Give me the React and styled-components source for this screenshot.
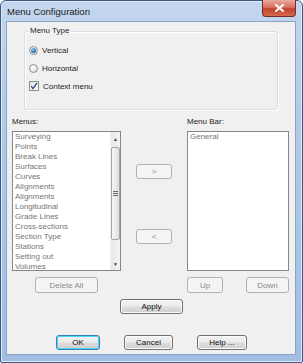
import React from "react";
import styled, { createGlobalStyle, css } from "styled-components";

const GlobalStyle = createGlobalStyle`
  html, body {
    margin: 0;
    padding: 0;
    background: #ffffff;
  }
  * {
    box-sizing: border-box;
  }
`;

const font = `"Liberation Sans", Arial, sans-serif`;

const Window = styled.div`
  width: 303px;
  height: 363px;
  display: flex;
  flex-direction: column;
  padding: 0 6px 7px 5px;
  border: 1px solid #3b5784;
  border-radius: 6px 6px 2px 2px;
  background: linear-gradient(180deg, #c3d6ee 0%, #b3cbe8 30%, #a1bde2 100%);
  box-shadow: inset 0 0 0 1px #dfeaf7;
  font-family: ${font};
`;

const TitleBar = styled.div`
  height: 20px;
  display: flex;
  align-items: flex-start;
  justify-content: space-between;
`;

const Title = styled.div`
  font-size: 9.5px;
  line-height: 10px;
  margin-top: 6px;
  margin-left: 1px;
  color: #1b1b1b;
`;

const CloseButton = styled.div`
  width: 34px;
  height: 17px;
  margin-top: -1px;
  border: 1px solid #7a2a22;
  border-top: none;
  border-radius: 0 0 4px 4px;
  background: linear-gradient(180deg, #e9a99c 0%, #d8715f 45%, #c1412c 55%, #d36b4e 100%);
  display: flex;
  align-items: center;
  justify-content: center;
`;

const Client = styled.div`
  flex: 1;
  background: #f0f0f0;
  border: 1px solid #8ba3c4;
  display: flex;
  flex-direction: column;
  padding: 0 0 0 5px;
`;

const GroupBox = styled.fieldset`
  margin: 4px 0 0 12px;
  width: 254px;
  height: 84px;
  padding: 0;
  border: 1px solid #d5dfe5;
  border-radius: 3px;
  box-shadow: inset 1px 1px 0 #ffffff, 1px 1px 0 #ffffff;
`;

const Legend = styled.legend`
  margin-left: 3px;
  padding: 0 2px;
  font-size: 8px;
  line-height: 10px;
  color: #1e1e1e;
`;

const Options = styled.div`
  display: flex;
  flex-direction: column;
  margin-top: 5px;
  padding-left: 4px;
`;

const Option = styled.label`
  height: 18px;
  display: flex;
  align-items: center;
  gap: 4px;
  font-size: 8px;
  color: #1e1e1e;
`;

const Radio = styled.span`
  width: 9px;
  height: 9px;
  border-radius: 50%;
  border: 1px solid #8e8f8f;
  background: radial-gradient(circle at 40% 35%, #ffffff 0%, #e6e6e6 60%, #cfcfcf 100%);
  display: flex;
  align-items: center;
  justify-content: center;
  ${(p) =>
    p.checked &&
    css`
      &::after {
        content: "";
        width: 5px;
        height: 5px;
        border-radius: 50%;
        background: radial-gradient(circle at 40% 35%, #8fd4f5 0%, #2a78b5 55%, #1c4f86 100%);
      }
    `}
`;

const Checkbox = styled.span`
  width: 10px;
  height: 10px;
  border: 1px solid #8e8f8f;
  background: linear-gradient(135deg, #e2e2e2 0%, #ffffff 100%);
  display: flex;
  align-items: center;
  justify-content: center;
`;

const Panels = styled.div`
  display: grid;
  grid-template-columns: 109px 36px 102px;
  column-gap: 15px;
  margin-top: 7px;
`;

const FieldLabel = styled.div`
  font-size: 8px;
  line-height: 10px;
  color: #1e1e1e;
  height: 10px;
`;

const ListBox = styled.div`
  margin-top: 4px;
  height: 140px;
  background: #ffffff;
  border: 1px solid #828790;
  display: flex;
  overflow: hidden;
`;

const Items = styled.div`
  flex: 1;
  padding: 0 0 0 2px;
  font-size: 8px;
  line-height: 10px;
  color: #767676;
  white-space: nowrap;
`;

const ScrollBar = styled.div`
  width: 10px;
  display: flex;
  flex-direction: column;
  background: linear-gradient(90deg, #e8e8e8, #f4f4f4);
  border-left: 1px solid #f0f0f0;
`;

const ScrollArrow = styled.div`
  height: 13px;
  display: flex;
  align-items: center;
  justify-content: center;
  font-size: 5px;
  color: #404040;
`;

const Thumb = styled.div`
  margin: 2px 0 0 0;
  height: 93px;
  border: 1px solid #a5a5a5;
  border-radius: 2px;
  background: linear-gradient(90deg, #f6f6f6 0%, #ebebeb 50%, #dcdcdc 100%);
  display: flex;
  align-items: center;
  justify-content: center;
`;

const Grip = styled.div`
  width: 5px;
  height: 5px;
  background: repeating-linear-gradient(180deg, #6b6b6b 0 1px, transparent 1px 2px);
`;

const ScrollTrack = styled.div`
  flex: 1;
`;

const MiddleColumn = styled.div`
  margin-top: 4px;
  display: flex;
  flex-direction: column;
  padding-top: 33px;
  gap: 50px;
`;

const Button = styled.div`
  height: ${(p) => p.h || 15}px;
  width: ${(p) => p.w}px;
  display: flex;
  align-items: center;
  justify-content: center;
  font-size: 8px;
  border-radius: 3px;
  ${(p) =>
    p.disabled
      ? css`
          border: 1px solid #adb2b5;
          background: #f4f4f4;
          color: #8a8a8a;
        `
      : css`
          border: 1px solid ${p.primary ? "#3c7fb1" : "#707070"};
          background: linear-gradient(180deg, #f2f2f2 0%, #ebebeb 48%, #dddddd 52%, #cfcfcf 100%);
          color: #111111;
          box-shadow: inset 0 0 0 1px ${p.primary ? "#48d8fb" : "#fcfcfc"};
        `}
`;

const ButtonCell = styled.div`
  margin-top: 6px;
  display: flex;
  justify-content: ${(p) => p.justify || "center"};
`;

const ApplyRow = styled.div`
  margin-top: 6px;
  display: flex;
  justify-content: center;
  padding-right: 4px;
`;

const DialogButtons = styled.div`
  margin-top: 21px;
  display: flex;
  justify-content: center;
  gap: 24px;
  padding-right: 4px;
`;

const menus = [
  "Surveying",
  "Points",
  "Break Lines",
  "Surfaces",
  "Curves",
  "Alignments",
  "Alignments",
  "Longitudinal",
  "Grade Lines",
  "Cross-sections",
  "Section Type",
  "Stations",
  "Setting out",
  "Volumes",
];

export default function App() {
  return (
    <>
      <GlobalStyle />
      <Window>
        <TitleBar>
          <Title>Menu Configuration</Title>
          <CloseButton>
            <svg width="9" height="8" viewBox="0 0 9 8">
              <path d="M1 1 L8 7 M8 1 L1 7" stroke="#ffffff" strokeWidth="2" strokeLinecap="square" />
            </svg>
          </CloseButton>
        </TitleBar>
        <Client>
          <GroupBox>
            <Legend>Menu Type</Legend>
            <Options>
              <Option>
                <Radio checked />
                Vertical
              </Option>
              <Option>
                <Radio />
                Horizontal
              </Option>
              <Option>
                <Checkbox>
                  <svg width="8" height="8" viewBox="0 0 8 8">
                    <path d="M1.2 4.2 L3 6.6 L7 0.8" stroke="#2b4a8a" strokeWidth="1.3" fill="none" />
                  </svg>
                </Checkbox>
                Context menu
              </Option>
            </Options>
          </GroupBox>

          <Panels>
            <FieldLabel>Menus:</FieldLabel>
            <div />
            <FieldLabel>Menu Bar:</FieldLabel>

            <ListBox>
              <Items>
                {menus.map((m, i) => (
                  <div key={i}>{m}</div>
                ))}
              </Items>
              <ScrollBar>
                <ScrollArrow>▲</ScrollArrow>
                <Thumb>
                  <Grip />
                </Thumb>
                <ScrollTrack />
                <ScrollArrow>▼</ScrollArrow>
              </ScrollBar>
            </ListBox>
            <MiddleColumn>
              <Button w={36} disabled>&gt;</Button>
              <Button w={36} disabled>&lt;</Button>
            </MiddleColumn>
            <ListBox>
              <Items>
                <div>General</div>
              </Items>
            </ListBox>

            <ButtonCell>
              <Button w={63} h={16} disabled>Delete All</Button>
            </ButtonCell>
            <div />
            <ButtonCell justify="space-between">
              <Button w={36} h={16} disabled>Up</Button>
              <Button w={43} h={16} disabled>Down</Button>
            </ButtonCell>
          </Panels>

          <ApplyRow>
            <Button w={63}>Apply</Button>
          </ApplyRow>

          <DialogButtons>
            <Button w={44} primary>OK</Button>
            <Button w={49}>Cancel</Button>
            <Button w={50}>Help ...</Button>
          </DialogButtons>
        </Client>
      </Window>
    </>
  );
}
